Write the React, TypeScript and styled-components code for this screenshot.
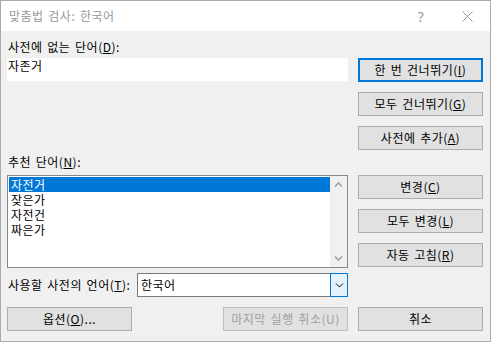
import React from "react";
import styled, { createGlobalStyle, css } from "styled-components";

const GlobalStyle = createGlobalStyle`
  html, body { margin: 0; padding: 0; background: #ffffff; }
  body {
    font-family: "Noto Sans CJK KR", "Noto Sans", sans-serif;
    font-size: 12px;
    letter-spacing: 0.5px;
    word-spacing: 1.5px;
    color: #000000;
  }
  * { box-sizing: border-box; }
`;

const Window = styled.div`
  width: 491px;
  height: 342px;
  border: 1px solid #aaaaaa;
  background: #f0f0f0;
  display: flex;
  flex-direction: column;
`;

const TitleBar = styled.div`
  height: 30px;
  background: #ffffff;
  display: flex;
  align-items: center;
  padding-left: 8px;
  color: #999999;
`;

const Title = styled.div`
  flex: 1;
  font-size: 12px;
  line-height: 16px;
`;

const TitleButton = styled.div`
  width: 46px;
  height: 30px;
  display: flex;
  align-items: center;
  justify-content: center;
  font-family: "Segoe UI", "Noto Sans", sans-serif;
  font-size: 14px;
  color: #999999;
`;

const Body = styled.div`
  flex: 1;
  display: flex;
  flex-direction: column;
  padding: 0 6px;
`;

const Row = styled.div<{ $height?: number; $top?: number }>`
  display: grid;
  grid-template-columns: 341px 125px;
  column-gap: 10px;
  align-items: start;
  ${(p) => p.$height !== undefined && css`height: ${p.$height}px;`}
  ${(p) => p.$top !== undefined && css`margin-top: ${p.$top}px;`}
`;

const Label = styled.div<{ $bottom: number }>`
  align-self: end;
  line-height: 16px;
  margin-bottom: ${(p) => p.$bottom}px;
  padding-left: 1px;
  white-space: nowrap;
`;

const Key = styled.span`
  text-decoration: underline;
  text-underline-offset: 1px;
`;

const TextBox = styled.div`
  height: 23px;
  background: #ffffff;
  padding-left: 1px;
  line-height: 16px;
`;

const ButtonStack = styled.div`
  display: flex;
  flex-direction: column;
  gap: 10px;
`;

const Button = styled.button<{ $primary?: boolean }>`
  width: 125px;
  height: 24px;
  padding: 0;
  margin: 0;
  background: #e1e1e1;
  border: 1px solid #adadad;
  font-family: "Noto Sans CJK KR", "Noto Sans", sans-serif;
  font-size: 12px;
  letter-spacing: 0.5px;
  word-spacing: 1.5px;
  line-height: 16px;
  color: #000000;
  display: flex;
  align-items: center;
  justify-content: center;
  ${(p) =>
    p.$primary &&
    css`
      border: 2px solid #0078d7;
    `}
  &:disabled {
    color: #a0a0a0;
    border-color: #bfbfbf;
    background: #e1e1e1;
  }
`;

const ListBox = styled.div`
  height: 93px;
  border: 1px solid #828790;
  background: #ffffff;
  display: flex;
`;

const ListItems = styled.div`
  flex: 1;
  padding: 1px 0 0 1px;
`;

const ListItem = styled.div<{ $selected?: boolean }>`
  height: 15px;
  line-height: 15px;
  padding-left: 2px;
  overflow: hidden;
  ${(p) =>
    p.$selected &&
    css`
      background: #0078d7;
      color: #ffffff;
    `}
`;

const ScrollTrack = styled.div`
  width: 17px;
  background: #f0f0f0;
  display: flex;
  flex-direction: column;
  justify-content: space-between;
`;

const ArrowBox = styled.div`
  width: 17px;
  height: 17px;
  display: flex;
  align-items: center;
  justify-content: center;
`;

const LanguageRow = styled.div`
  display: flex;
  align-items: center;
  height: 24px;
`;

const LanguageLabel = styled.div`
  width: 130px;
  line-height: 16px;
  padding-left: 1px;
  white-space: nowrap;
`;

const Combo = styled.div`
  flex: 1;
  height: 24px;
  border: 1px solid #7a7a7a;
  background: #ffffff;
  display: flex;
`;

const ComboText = styled.div`
  flex: 1;
  padding-left: 3px;
  line-height: 21px;
`;

const DropButton = styled.div`
  width: 18px;
  margin: -1px -1px -1px 0;
  border: 1px solid #0078d7;
  background: #e5f1fb;
  display: flex;
  align-items: center;
  justify-content: center;
`;

const BottomLeft = styled.div`
  display: flex;
  justify-content: space-between;
`;

const Chevron = ({ up, color, w = 9 }: { up?: boolean; color: string; w?: number }) => (
  <svg width={w} height={w} viewBox="0 0 9 9">
    <polyline
      points={up ? "1,6.5 4.5,3 8,6.5" : "1,2.5 4.5,6 8,2.5"}
      fill="none"
      stroke={color}
      strokeWidth={up || color !== "#000" ? 1.6 : 1}
    />
  </svg>
);

const CloseIcon = () => (
  <svg width="11" height="11" viewBox="0 0 11 11">
    <path d="M0.5 0.5 L10.5 10.5 M10.5 0.5 L0.5 10.5" stroke="#999999" strokeWidth="1" />
  </svg>
);

export default function App() {
  return (
    <>
      <GlobalStyle />
      <Window>
        <TitleBar>
          <Title>맞춤법 검사: 한국어</Title>
          <TitleButton>?</TitleButton>
          <TitleButton>
            <CloseIcon />
          </TitleButton>
        </TitleBar>
        <Body>
          <Row $height={27}>
            <Label $bottom={3}>
              사전에 없는 단어(<Key>D</Key>):
            </Label>
          </Row>
          <Row>
            <TextBox>자존거</TextBox>
            <ButtonStack>
              <Button $primary>
                한 번 건너뛰기(<Key>I</Key>)
              </Button>
              <Button>
                모두 건너뛰기(<Key>G</Key>)
              </Button>
              <Button>
                사전에 추가(<Key>A</Key>)
              </Button>
            </ButtonStack>
          </Row>
          <Row $height={25}>
            <Label $bottom={5}>
              추천 단어(<Key>N</Key>):
            </Label>
          </Row>
          <Row>
            <ListBox>
              <ListItems>
                <ListItem $selected>자전거</ListItem>
                <ListItem>잦은가</ListItem>
                <ListItem>자전건</ListItem>
                <ListItem>짜은가</ListItem>
              </ListItems>
              <ScrollTrack>
                <ArrowBox>
                  <Chevron up color="#a3a3a3" />
                </ArrowBox>
                <ArrowBox>
                  <Chevron color="#a3a3a3" />
                </ArrowBox>
              </ScrollTrack>
            </ListBox>
            <ButtonStack>
              <Button>
                변경(<Key>C</Key>)
              </Button>
              <Button>
                모두 변경(<Key>L</Key>)
              </Button>
              <Button>
                자동 고침(<Key>R</Key>)
              </Button>
            </ButtonStack>
          </Row>
          <Row $top={5}>
            <LanguageRow>
              <LanguageLabel>
                사용할 사전의 언어(<Key>T</Key>):
              </LanguageLabel>
              <Combo>
                <ComboText>한국어</ComboText>
                <DropButton>
                  <Chevron color="#000" />
                </DropButton>
              </Combo>
            </LanguageRow>
          </Row>
          <Row $top={10}>
            <BottomLeft>
              <Button>
                옵션(<Key>O</Key>)...
              </Button>
              <Button disabled>마지막 실행 취소(U)</Button>
            </BottomLeft>
            <Button>취소</Button>
          </Row>
        </Body>
      </Window>
    </>
  );
}
